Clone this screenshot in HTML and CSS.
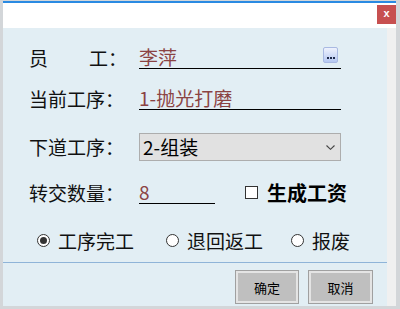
FILE: index.html
```html
<!DOCTYPE html>
<html lang="zh-CN">
<head>
  <meta charset="UTF-8">
  <title>转交</title>
  <link rel="stylesheet" href="styles.css">
</head>
<body>
  <div class="window">
    <div class="titlebar">
      <span class="close">x</span>
    </div>
    <div class="main">
      <div class="content">
        <div class="row row-1">
          <span class="label"><span class="spread">员</span>工：</span>
          <span class="field field-wide">李萍<span class="more-btn"><i></i><i></i><i></i></span></span>
        </div>

        <div class="row row-2">
          <span class="label">当前工序：</span>
          <span class="field field-wide">1-抛光打磨</span>
        </div>

        <div class="row row-3">
          <span class="label">下道工序：</span>
          <div class="select">
            <span>2-组装</span>
            <svg width="9" height="5" viewBox="0 0 9 5"><path d="M0.5 0.5 L4.5 4.3 L8.5 0.5" fill="none" stroke="#444" stroke-width="1.1"/></svg>
          </div>
        </div>

        <div class="row row-4">
          <span class="label">转交数量：</span>
          <span class="field field-short">8</span>
          <span class="check"></span>
          <span class="check-text">生成工资</span>
        </div>

        <!-- 处理方式 -->
        <div class="row row-5">
          <span class="radio checked"></span><span class="radio-text first">工序完工</span>
          <span class="radio"></span><span class="radio-text second">退回返工</span>
          <span class="radio"></span><span class="radio-text">报废</span>
        </div>

        <div class="sep"></div>

        <div class="buttons">
          <button class="btn">确定</button>
          <button class="btn">取消</button>
        </div>
      </div>
      <div class="strip"></div>
    </div>
  </div>
</body>
</html>
```

FILE: styles.css
```css
* {
  box-sizing: border-box;
}
body {
  margin: 0;
  background: #d3d6d9;
  font-family: "Noto Sans CJK SC", "Noto Sans", sans-serif;
}
.window {
  width: 393px;
  height: 305px;
  margin: 1px 0 0 3px;
  border-top: 2px solid #2a8ae2;
  background: #fff;
  display: flex;
  flex-direction: column;
}
.titlebar {
  height: 25px;
  padding-top: 2px;
  display: flex;
  justify-content: flex-end;
  align-items: flex-start;
}
.close {
  width: 19px;
  height: 19px;
  background: #c75050;
  color: #fff;
  font-family: "Liberation Sans", Arial, sans-serif;
  font-weight: bold;
  font-size: 11px;
  line-height: 17px;
  text-align: center;
}
.main {
  flex: 1;
  display: flex;
}
.content {
  width: 384px;
  background: #e2eef4;
  display: flex;
  flex-direction: column;
}
.strip {
  flex: 1;
  background: #f0f0f0;
}
.row {
  display: flex;
  align-items: center;
  padding-left: 26px;
  height: 23px;
  font-size: 19px;
  line-height: 22px;
  color: #111;
}
.row-1 {
  margin-top: 18px;
}
.row-2 {
  margin-top: 18px;
}
.row-3 {
  margin-top: 23px;
  height: 28px;
}
.row-4 {
  margin-top: 20px;
}
.row-5 {
  margin-top: 25px;
  padding-left: 34px;
}
.label {
  width: 110px;
  white-space: nowrap;
}
.spread {
  margin-right: 41px;
}
.field {
  display: flex;
  align-items: center;
  height: 23px;
  border-bottom: 1px solid #000;
  color: #8b4343;
  white-space: nowrap;
}
.field-wide {
  width: 202px;
  position: relative;
}
.field-short {
  width: 76px;
}
.more-btn {
  position: absolute;
  right: 3px;
  top: 1px;
  width: 15px;
  height: 16px;
  border: 1px solid #a9b9e2;
  border-radius: 2px;
  background: linear-gradient(#eef2fd, #b5c8f2);
  display: flex;
  align-items: flex-end;
  justify-content: center;
  gap: 1px;
  padding-bottom: 3px;
}
.more-btn i {
  width: 2px;
  height: 2px;
  background: #1e2a4a;
}
.select {
  width: 202px;
  height: 28px;
  border: 1px solid #adadad;
  background: #e1e1e1;
  display: flex;
  align-items: center;
  justify-content: space-between;
  padding: 0 5px 0 3px;
  color: #000;
}
.check {
  width: 13px;
  height: 13px;
  border: 1px solid #333;
  background: #fff;
  margin-left: 30px;
  margin-right: 9px;
}
.check-text {
  font-weight: bold;
  font-size: 20px;
  color: #000;
}
.radio {
  width: 13px;
  height: 13px;
  border: 1px solid #333;
  border-radius: 50%;
  background: #fff;
  display: flex;
  align-items: center;
  justify-content: center;
  margin-right: 8px;
}
.radio.checked::after {
  content: "";
  width: 7px;
  height: 7px;
  border-radius: 50%;
  background: #333;
}
.radio-text.first {
  margin-right: 32px;
}
.radio-text.second {
  margin-right: 28px;
}
.sep {
  margin-top: 10px;
  height: 1px;
  background: #8fb4d8;
}
.buttons {
  margin-top: 7px;
  display: flex;
  justify-content: flex-end;
  gap: 9px;
  padding-right: 14px;
}
.btn {
  width: 64px;
  height: 34px;
  border: 1px solid #a0a0a0;
  box-shadow: inset 0 0 0 2px #e4e4e4;
  background: #bfbfbf;
  font-family: "Noto Sans CJK SC", sans-serif;
  font-size: 13px;
  color: #000;
  padding: 0;
}
.btn:last-child {
  width: 65px;
}
```
